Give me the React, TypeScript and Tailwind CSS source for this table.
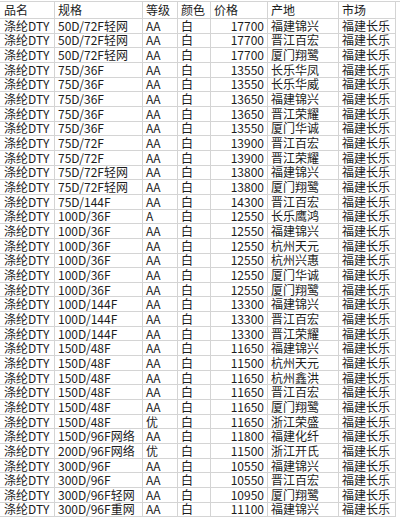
const rows: [string, string, string, string, string][] = [
  ["50D/72F轻网", "AA", "17700", "福建锦兴", "福建长乐"],
  ["50D/72F轻网", "AA", "17700", "晋江百宏", "福建长乐"],
  ["50D/72F轻网", "AA", "17700", "厦门翔鹭", "福建长乐"],
  ["75D/36F", "AA", "13550", "长乐华凤", "福建长乐"],
  ["75D/36F", "AA", "13550", "长乐华威", "福建长乐"],
  ["75D/36F", "AA", "13650", "福建锦兴", "福建长乐"],
  ["75D/36F", "AA", "13650", "晋江荣耀", "福建长乐"],
  ["75D/36F", "AA", "13550", "厦门华诚", "福建长乐"],
  ["75D/72F", "AA", "13900", "晋江百宏", "福建长乐"],
  ["75D/72F", "AA", "13900", "晋江荣耀", "福建长乐"],
  ["75D/72F轻网", "AA", "13800", "福建锦兴", "福建长乐"],
  ["75D/72F轻网", "AA", "13800", "厦门翔鹭", "福建长乐"],
  ["75D/144F", "AA", "14300", "晋江百宏", "福建长乐"],
  ["100D/36F", "A", "12550", "长乐鹰鸿", "福建长乐"],
  ["100D/36F", "AA", "12550", "福建锦兴", "福建长乐"],
  ["100D/36F", "AA", "12550", "杭州天元", "福建长乐"],
  ["100D/36F", "AA", "12550", "杭州兴惠", "福建长乐"],
  ["100D/36F", "AA", "12550", "厦门华诚", "福建长乐"],
  ["100D/36F", "AA", "12550", "厦门翔鹭", "福建长乐"],
  ["100D/144F", "AA", "13300", "福建锦兴", "福建长乐"],
  ["100D/144F", "AA", "13300", "晋江百宏", "福建长乐"],
  ["100D/144F", "AA", "13300", "晋江荣耀", "福建长乐"],
  ["150D/48F", "AA", "11650", "福建锦兴", "福建长乐"],
  ["150D/48F", "AA", "11500", "杭州天元", "福建长乐"],
  ["150D/48F", "AA", "11650", "杭州鑫洪", "福建长乐"],
  ["150D/48F", "AA", "11650", "晋江百宏", "福建长乐"],
  ["150D/48F", "AA", "11650", "厦门翔鹭", "福建长乐"],
  ["150D/48F", "优", "11650", "浙江荣盛", "福建长乐"],
  ["150D/96F网络", "AA", "11800", "福建化纤", "福建长乐"],
  ["200D/96F网络", "优", "11500", "浙江开氏", "福建长乐"],
  ["300D/96F", "AA", "10550", "福建锦兴", "福建长乐"],
  ["300D/96F", "AA", "10550", "晋江百宏", "福建长乐"],
  ["300D/96F轻网", "AA", "10950", "厦门翔鹭", "福建长乐"],
  ["300D/96F重网", "AA", "11100", "福建锦兴", "福建长乐"],
];

const cell = "flex items-center border-r border-b border-[#d4d4d4] whitespace-nowrap";

export default function App() {
  return (
    <div
      className="w-[400px] h-[520px] bg-white text-[12px] text-[#1c1c1c] overflow-hidden pt-px"
      style={{ fontFamily: '"Noto Sans CJK SC", "Noto Sans", sans-serif' }}
    >
      <div className="grid grid-cols-[55px_88px_35px_33px_57px_71px_57px] border-t border-[#d4d4d4] leading-[12px]">
        <div className={`${cell} h-[17px] pl-[4px]`}>品名</div>
        <div className={`${cell} h-[17px] pl-[3px]`}>规格</div>
        <div className={`${cell} h-[17px] pl-[3px]`}>等级</div>
        <div className={`${cell} h-[17px] pl-[3px]`}>颜色</div>
        <div className={`${cell} h-[17px] pl-[3px]`}>价格</div>
        <div className={`${cell} h-[17px] pl-[3px]`}>产地</div>
        <div className={`${cell} h-[17px] pl-[3px]`}>市场</div>

        {rows.map((r, i) => (
          <div key={i} className="contents">
            <div className={`${cell} h-[14.66px] pl-[4px]`}>涤纶DTY</div>
            <div className={`${cell} h-[14.66px] pl-[3px]`}>{r[0]}</div>
            <div className={`${cell} h-[14.66px] pl-[3px]`}>{r[1]}</div>
            <div className={`${cell} h-[14.66px] pl-[3px]`}>白</div>
            <div className={`${cell} h-[14.66px] justify-end pr-[3px]`}>{r[2]}</div>
            <div className={`${cell} h-[14.66px] pl-[3px]`}>{r[3]}</div>
            <div className={`${cell} h-[14.66px] pl-[3px]`}>{r[4]}</div>
          </div>
        ))}
      </div>
    </div>
  );
}
